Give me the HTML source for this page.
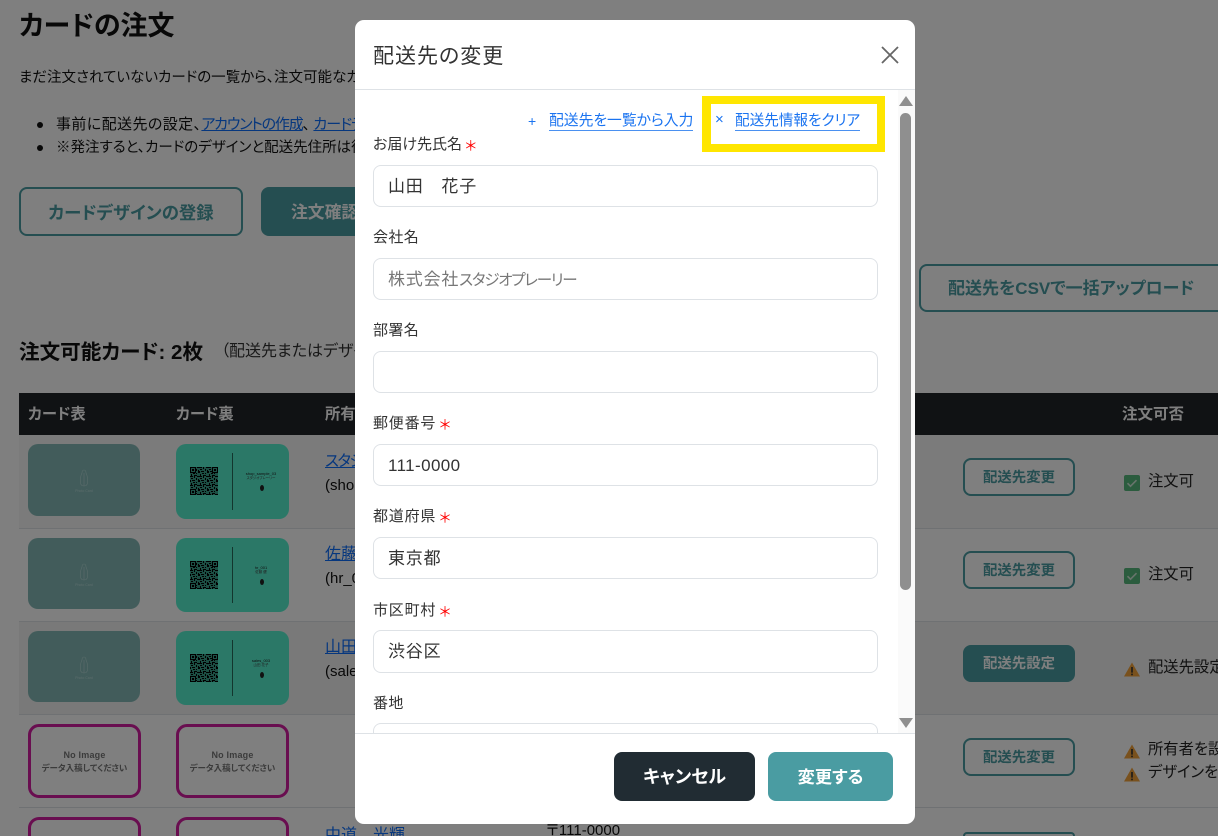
<!DOCTYPE html>
<html lang="ja">
<head>
<meta charset="utf-8">
<title>配送先の変更</title>
<style>
html,body{margin:0;padding:0;width:1218px;height:836px;overflow:hidden;background:#fff}
body{font-family:"Liberation Sans","Noto Sans CJK JP",sans-serif;color:#212529;font-feature-settings:"palt"}
#w{position:relative;width:1218px;height:836px;overflow:hidden;contain:paint}
.t{position:absolute;white-space:nowrap;line-height:20px}
.a{position:absolute;box-sizing:border-box}
a{color:#0d6efd;text-decoration:underline}
.ow{position:absolute;box-sizing:border-box;border:2px solid #4a9ca2;border-radius:8px;color:#4a9ca2;font-weight:700;text-align:center;white-space:nowrap;background:#fff}
.fl{background:#4a9ca2;color:#fff}
.front{position:absolute;left:28px;width:112px;background:#84b9b6;border-radius:10px}
.back{position:absolute;left:176px;width:113px;background:#56f0cf;border-radius:10px}
.none{position:absolute;width:113px;height:74px;box-sizing:border-box;border:3px solid #d21ca0;border-radius:11px;background:#fff;text-align:center;color:#777;font-size:8.500px;font-weight:700;line-height:13px;padding-top:22px}
.none b{font-size:9px;letter-spacing:.2px}
.rule{position:absolute;left:19px;width:1199px;height:1px;background:#dee2e6}
.row{position:absolute;left:19px;width:1199px}
.lbl{position:absolute;left:18px;font-size:15px;line-height:20px;color:#333;white-space:nowrap;letter-spacing:.4px}
.req{color:#f00;font-size:14px;margin-left:3px;position:relative;top:2px;line-height:10px;letter-spacing:0;font-weight:400}
.inp{position:absolute;left:18px;width:505px;height:42px;box-sizing:border-box;border:1px solid #dee2e6;border-radius:8px;background:#fff;padding-left:14px;font-size:17px;line-height:41px;color:#333;letter-spacing:.8px;white-space:nowrap}
.lk{color:#1a73f0;border-bottom:1px solid #4a90f0}
.m{position:absolute;text-align:center;white-space:nowrap;line-height:5px;color:#222}
</style>
</head>
<body>
<div id="w">
<svg width="0" height="0" style="position:absolute">
<defs>
<pattern id="qrp" width="9" height="9" patternUnits="userSpaceOnUse"><path d="M0 0h3v1H0zM4 0h1v2H4zM7 0h2v1H7zM1 2h2v1H1zM6 2h1v2H6zM0 4h1v2H0zM2 4h3v1H2zM8 3h1v3H8zM3 6h2v1H3zM6 6h1v1H6zM1 7h1v2H1zM4 8h3v1H4z" fill="#000"/></pattern>
<symbol id="qr" viewBox="0 0 28 28">
<rect width="28" height="28" fill="#000" fill-opacity=".35"/>
<rect width="28" height="28" fill="url(#qrp)"/>
<path d="M0 0h6v6H0zM22 0h6v6h-6zM0 22h6v6H0z" fill="#000"/>
<path d="M1 1h4v4H1zM23 1h4v4h-4zM1 23h4v4H1z" fill="#3aa28e"/>
<path d="M2 2h2v2H2zM24 2h2v2h-2zM2 24h2v2H2z" fill="#000"/>
</symbol>
<symbol id="ok" viewBox="0 0 16 16"><rect width="16" height="16" rx="2" fill="#57b87c"/><path d="M3.500 8.200l3 3 6-6" fill="none" stroke="#cfe9d8" stroke-width="1.600"/></symbol>
<symbol id="warn" viewBox="0 0 16 15"><path d="M8 .5L16 14.500H0z" fill="#f2a23a"/><path d="M7.200 5h1.600v5.600H7.200zM7.200 11.600h1.600v1.600H7.200z" fill="#333"/></symbol>
<symbol id="peng" viewBox="0 0 14 20"><path d="M7 1C5.500 1 5 2.500 5 4 3.500 7 3 10 3.500 14c.3 2 1.800 3 3.500 3s3.200-1 3.500-3c.5-4 0-7-1.500-10 0-1.500-.5-3-2-3zM7 4v13" fill="none" stroke="#b6d8d7" stroke-width=".6"/></symbol>
</defs>
</svg>

<!-- Background page -->
<div class="t" style="left:19px;top:8px;font-size:27px;line-height:36px;font-weight:700;color:#111">カードの注文</div>
<div class="t" style="left:19px;top:68px;font-size:14.500px;color:#111">まだ注文されていないカードの一覧から、注文可能なカードを選択してください</div>
<div class="a" style="left:37px;top:122px;width:6px;height:6px;border-radius:50%;background:#111"></div>
<div class="a" style="left:37px;top:145px;width:6px;height:6px;border-radius:50%;background:#111"></div>
<div class="t" style="left:56px;top:115px;font-size:15px;letter-spacing:.4px;color:#111">事前に配送先の設定、<a href="#" style="letter-spacing:-1.200px">アカウントの作成</a><span style="margin-right:3px">、</span><a href="#" style="letter-spacing:-.9px">カードデザインの登録</a></div>
<div class="t" style="left:56px;top:138px;font-size:14.500px;color:#111">※発注すると、カードのデザインと配送先住所は後から変更できません</div>

<div class="ow" style="left:19px;top:187px;width:224px;height:49px;font-size:17.400px;line-height:48px">カードデザインの登録</div>
<div class="ow fl" style="left:261px;top:187px;width:200px;height:49px;font-size:16.800px;line-height:48px;text-align:left;padding-left:28px">注文確認へ</div>
<div class="ow" style="left:919px;top:264px;width:320px;height:48px;font-size:17px;line-height:46px;text-align:left;padding-left:27px">配送先をCSVで一括アップロード</div>

<div class="t" style="left:19px;top:340px;font-size:20.600px;line-height:26px;font-weight:700;color:#111">注文可能カード: 2枚</div>
<div class="t" style="left:221px;top:342px;font-size:16px;line-height:20px;color:#333">（配送先またはデザインが未設定のカードは注文できません）</div>

<div class="a" style="left:19px;top:393px;width:1199px;height:42px;background:#212529"></div>
<div class="t" style="left:28px;top:405px;font-size:15.300px;font-weight:700;color:#fff">カード表</div>
<div class="t" style="left:176px;top:405px;font-size:15.300px;font-weight:700;color:#fff">カード裏</div>
<div class="t" style="left:325px;top:405px;font-size:15.300px;font-weight:700;color:#fff">所有者</div>
<div class="t" style="left:1122px;top:405px;font-size:15.500px;font-weight:700;color:#fff">注文可否</div>

<div class="row" style="top:435px;height:93px;background:#f7f7f7"></div>
<div class="row" style="top:622px;height:92px;background:#f2f2f2"></div>
<div class="rule" style="top:528px"></div>
<div class="rule" style="top:621px"></div>
<div class="rule" style="top:714px"></div>
<div class="rule" style="top:807px"></div>

<!-- Row 1 -->
<div class="front" style="top:444px;height:72px"><svg class="a" style="left:49px;top:25px" width="14" height="20"><use href="#peng"/></svg><div class="m" style="left:0;width:112px;top:45px;font-size:3.500px;color:#b6d8d7">Photo Card</div></div>
<div class="back" style="top:444px;height:75px">
<svg class="a" style="left:14px;top:23px;filter:blur(.25px)" width="28" height="28"><use href="#qr"/></svg>
<div class="a" style="left:56px;top:9px;width:1px;height:57px;background:rgba(0,0,0,.55)"></div>
<div class="m" style="left:57px;width:56px;top:27px;font-size:4px">shop_sample_03</div>
<div class="m" style="left:57px;width:56px;top:32px;font-size:3.500px;color:#444">スタジオプレーリー</div>
<div class="a" style="left:84px;top:41px;width:4px;height:6px;background:#222;border-radius:50%"></div>
</div>
<div class="t" style="left:325px;top:452px;font-size:15.500px;letter-spacing:-1.500px;width:30px;overflow:hidden"><a href="#">スタジオ</a></div>
<div class="t" style="left:325px;top:476px;font-size:15px;color:#111;width:30px;overflow:hidden">(shop_sample)</div>
<div class="ow" style="left:963px;top:458px;width:112px;height:38px;font-size:14.400px;line-height:36px">配送先変更</div>
<svg class="a" style="left:1124px;top:475px" width="16" height="16"><use href="#ok"/></svg>
<div class="t" style="left:1148px;top:472px;font-size:15.300px;color:#222">注文可</div>

<!-- Row 2 -->
<div class="front" style="top:538px;height:71px"><svg class="a" style="left:49px;top:25px" width="14" height="20"><use href="#peng"/></svg><div class="m" style="left:0;width:112px;top:45px;font-size:3.500px;color:#b6d8d7">Photo Card</div></div>
<div class="back" style="top:538px;height:74px">
<svg class="a" style="left:14px;top:23px;filter:blur(.25px)" width="28" height="28"><use href="#qr"/></svg>
<div class="a" style="left:56px;top:9px;width:1px;height:56px;background:rgba(0,0,0,.55)"></div>
<div class="m" style="left:57px;width:56px;top:27px;font-size:4px">hr_001</div>
<div class="m" style="left:57px;width:56px;top:32px;font-size:3.500px;color:#444">佐藤 健</div>
<div class="a" style="left:84px;top:41px;width:4px;height:6px;background:#222;border-radius:50%"></div>
</div>
<div class="t" style="left:325px;top:545px;font-size:16px;width:30px;overflow:hidden"><a href="#">佐藤</a></div>
<div class="t" style="left:325px;top:569px;font-size:15px;color:#111;width:30px;overflow:hidden">(hr_001)</div>
<div class="ow" style="left:963px;top:551px;width:112px;height:38px;font-size:14.400px;line-height:36px">配送先変更</div>
<svg class="a" style="left:1124px;top:568px" width="16" height="16"><use href="#ok"/></svg>
<div class="t" style="left:1148px;top:565px;font-size:15.300px;color:#222">注文可</div>

<!-- Row 3 -->
<div class="front" style="top:631px;height:71px"><svg class="a" style="left:49px;top:25px" width="14" height="20"><use href="#peng"/></svg><div class="m" style="left:0;width:112px;top:45px;font-size:3.500px;color:#b6d8d7">Photo Card</div></div>
<div class="back" style="top:631px;height:74px">
<svg class="a" style="left:14px;top:23px;filter:blur(.25px)" width="28" height="28"><use href="#qr"/></svg>
<div class="a" style="left:56px;top:9px;width:1px;height:56px;background:rgba(0,0,0,.55)"></div>
<div class="m" style="left:57px;width:56px;top:27px;font-size:4px">sales_003</div>
<div class="m" style="left:57px;width:56px;top:32px;font-size:3.500px;color:#444">山田 花子</div>
<div class="a" style="left:84px;top:41px;width:4px;height:6px;background:#222;border-radius:50%"></div>
</div>
<div class="t" style="left:325px;top:638px;font-size:16px;width:30px;overflow:hidden"><a href="#">山田</a></div>
<div class="t" style="left:325px;top:662px;font-size:15px;color:#111;width:30px;overflow:hidden">(sales_003)</div>
<div class="ow fl" style="left:963px;top:645px;width:112px;height:37px;font-size:14.400px;line-height:34px">配送先設定</div>
<svg class="a" style="left:1124px;top:662px" width="16" height="15"><use href="#warn"/></svg>
<div class="t" style="left:1148px;top:658px;font-size:15.300px;color:#222">配送先設定が必要です</div>

<!-- Row 4 -->
<div class="none" style="left:28px;top:724px"><b>No Image</b><br>データ入稿してください</div>
<div class="none" style="left:176px;top:724px"><b>No Image</b><br>データ入稿してください</div>
<div class="ow" style="left:963px;top:738px;width:112px;height:38px;font-size:14.400px;line-height:36px">配送先変更</div>
<svg class="a" style="left:1124px;top:744px" width="16" height="15"><use href="#warn"/></svg>
<div class="t" style="left:1148px;top:740px;font-size:15.300px;color:#222">所有者を設定してください</div>
<svg class="a" style="left:1124px;top:767px" width="16" height="15"><use href="#warn"/></svg>
<div class="t" style="left:1148px;top:763px;font-size:15.300px;color:#222">デザインを登録してください</div>

<!-- Row 5 -->
<div class="none" style="left:28px;top:817px;height:19px;padding:0;border-bottom:0;border-radius:11px 11px 0 0"></div>
<div class="none" style="left:176px;top:817px;height:19px;padding:0;border-bottom:0;border-radius:11px 11px 0 0"></div>
<div class="t" style="left:325px;top:826px;height:10px;overflow:hidden;font-size:16px"><a href="#">中道　光輝</a></div>
<div class="t" style="left:546px;top:821px;height:15px;overflow:hidden;font-size:15px;color:#111">〒111-0000</div>
<div class="ow" style="left:963px;top:832px;width:112px;height:4px;border-bottom:0;border-radius:8px 8px 0 0"></div>

<!-- Backdrop -->
<div class="a" style="left:0;top:0;width:1218px;height:836px;background:rgba(0,0,0,.5)"></div>

<!-- Modal -->
<div class="a" style="left:355px;top:20px;width:560px;height:804px;background:#fff;border-radius:9px;overflow:hidden">
  <div class="t" style="left:18px;top:22px;font-size:21px;line-height:30px;letter-spacing:1px;color:#333">配送先の変更</div>
  <svg class="a" style="left:525px;top:25px" width="20" height="20" viewBox="0 0 20 20"><path d="M2 2l16 16M18 2L2 18" stroke="#666" stroke-width="1.800" fill="none"/></svg>
  <div class="a" style="left:0;top:69px;width:560px;height:1px;background:#dee2e6"></div>

  <div class="a" style="left:0;top:70px;width:560px;height:643px;overflow:hidden">
    <div class="t" style="left:173px;top:21px;font-size:14px;color:#1a73f0">+</div>
    <div class="t lk" style="left:194px;top:22px;font-size:14.800px;line-height:18px">配送先を一覧から入力</div>
    <div class="a" style="left:347px;top:6px;width:183px;height:56px;border:8px solid #ffe600;border-left-width:9px"></div>
    <div class="t" style="left:360px;top:20px;font-size:15px;color:#1a73f0">×</div>
    <div class="t lk" style="left:380px;top:22px;font-size:14.600px;line-height:18px">配送先情報をクリア</div>

    <div class="lbl" style="top:45px;letter-spacing:0">お届け先氏名<span class="req">＊</span></div>
    <div class="inp" style="top:75px">山田　花子</div>
    <div class="lbl" style="top:138px">会社名</div>
    <div class="inp" style="top:168px;color:#777">株式会社<span style="font-size:15.500px;letter-spacing:-1.200px">スタジオプレーリー</span></div>
    <div class="lbl" style="top:231px">部署名</div>
    <div class="inp" style="top:261px"></div>
    <div class="lbl" style="top:324px;letter-spacing:.8px">郵便番号<span class="req">＊</span></div>
    <div class="inp" style="top:354px;letter-spacing:.4px">111-0000</div>
    <div class="lbl" style="top:417px;letter-spacing:.8px">都道府県<span class="req">＊</span></div>
    <div class="inp" style="top:447px">東京都</div>
    <div class="lbl" style="top:511px;letter-spacing:.8px">市区町村<span class="req">＊</span></div>
    <div class="inp" style="top:540px;height:43px">渋谷区</div>
    <div class="lbl" style="top:604px">番地</div>
    <div class="inp" style="top:633px;height:10px;border-bottom:0;border-radius:8px 8px 0 0"></div>

    <div class="a" style="left:543px;top:0;width:17px;height:643px;background:#fafafa"></div>
    <svg class="a" style="left:544px;top:6px" width="14" height="10"><path d="M7 0l7 10H0z" fill="#8f8f8f"/></svg>
    <div class="a" style="left:545px;top:23px;width:11px;height:477px;background:#8f8f8f;border-radius:6px"></div>
    <svg class="a" style="left:544px;top:628px" width="14" height="10"><path d="M0 0h14l-7 10z" fill="#8f8f8f"/></svg>
  </div>

  <div class="a" style="left:0;top:713px;width:560px;height:1px;background:#dee2e6"></div>
  <div class="a" style="left:259px;top:732px;width:141px;height:49px;background:#212c33;border-radius:8px;color:#fff;font-size:18px;font-weight:700;line-height:51px;text-align:center">キャンセル</div>
  <div class="a" style="left:413px;top:732px;width:125px;height:49px;background:#4a9ca2;border-radius:8px;color:#fff;font-size:17.200px;font-weight:700;line-height:51px;text-align:center">変更する</div>
</div>
</div>
</body>
</html>
